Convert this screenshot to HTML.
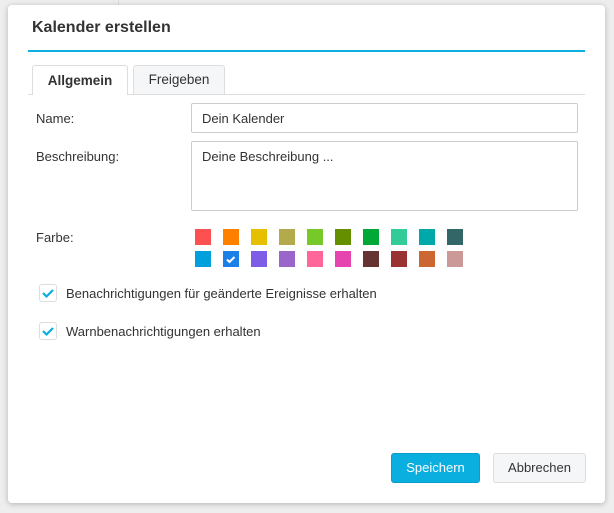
<!DOCTYPE html>
<html><head><style>
body{margin:0;width:614px;height:513px;background:#eeeeee;font-family:"Liberation Sans",sans-serif;position:relative;overflow:hidden;font-size:13px;color:#333}
.dlg{position:absolute;left:8px;top:5px;width:597px;height:498px;background:#fff;border-radius:4px;box-shadow:0 1px 6px rgba(0,0,0,.25)}
.a{position:absolute}
.sw{position:absolute;width:16px;height:16px}
.cb{position:absolute;left:31px;width:16px;height:16px;border:1px solid #ddd;border-radius:3px;background:#fff}
.inp{position:absolute;left:183px;width:387px;border:1px solid #ccc;border-radius:2px;font-size:13px;color:#333;padding:7px 10px;box-sizing:border-box}
</style></head><body>
<div class="a" style="left:118px;top:0;width:1px;height:5px;background:#ddd"></div>
<div class="dlg">
<div class="a" style="left:24px;top:14px;font-size:16px;font-weight:bold;color:#333">Kalender erstellen</div>
<div class="a" style="left:20px;top:45px;width:557px;height:2px;background:#0aaedf"></div>
<div class="a" style="left:20px;top:89px;width:557px;height:1px;background:#ddd"></div>
<div class="a" style="left:24px;top:60px;width:96px;height:30px;border:1px solid #ddd;border-bottom:none;background:#fff;border-radius:3px 3px 0 0;box-sizing:border-box;text-align:center;line-height:29px;font-weight:bold;font-size:13.5px">Allgemein</div>
<div class="a" style="left:125px;top:60px;width:92px;height:29px;border:1px solid #ddd;border-bottom:none;background:#f5f6f8;border-radius:3px 3px 0 0;box-sizing:border-box;text-align:center;line-height:28px;font-size:13.5px">Freigeben</div>
<div class="a" style="left:28px;top:106px">Name:</div>
<div class="inp" style="top:98px;height:30px">Dein Kalender</div>
<div class="a" style="left:28px;top:144px">Beschreibung:</div>
<div class="inp" style="top:136px;height:70px">Deine Beschreibung ...</div>
<div class="a" style="left:28px;top:225px">Farbe:</div>
<div class="sw" style="left:187px;top:224px;background:#fd5050"></div>
<div class="sw" style="left:215px;top:224px;background:#ff8000"></div>
<div class="sw" style="left:243px;top:224px;background:#e6bf00"></div>
<div class="sw" style="left:271px;top:224px;background:#b3aa4c"></div>
<div class="sw" style="left:299px;top:224px;background:#77c92a"></div>
<div class="sw" style="left:327px;top:224px;background:#668f00"></div>
<div class="sw" style="left:355px;top:224px;background:#00a838"></div>
<div class="sw" style="left:383px;top:224px;background:#33cc99"></div>
<div class="sw" style="left:411px;top:224px;background:#00a9a9"></div>
<div class="sw" style="left:439px;top:224px;background:#336666"></div>
<div class="sw" style="left:187px;top:246px;background:#00a0dc"></div>
<div class="sw" style="left:215px;top:246px;background:#1a7fe6"><svg width="16" height="16"><path d="M4 8.5l2.5 2.5 5-5" stroke="#fff" stroke-width="2" fill="none"/></svg></div>
<div class="sw" style="left:243px;top:246px;background:#7d5ce6"></div>
<div class="sw" style="left:271px;top:246px;background:#9966cc"></div>
<div class="sw" style="left:299px;top:246px;background:#ff6699"></div>
<div class="sw" style="left:327px;top:246px;background:#e645b0"></div>
<div class="sw" style="left:355px;top:246px;background:#663333"></div>
<div class="sw" style="left:383px;top:246px;background:#993333"></div>
<div class="sw" style="left:411px;top:246px;background:#cc6633"></div>
<div class="sw" style="left:439px;top:246px;background:#cc9999"></div>
<div class="cb" style="top:279px"><svg width="16" height="16"><path d="M3 8l3.5 3.5L13 5" stroke="#0aaedf" stroke-width="2.2" fill="none"/></svg></div>
<div class="a" style="left:58px;top:281px">Benachrichtigungen für geänderte Ereignisse erhalten</div>
<div class="cb" style="top:317px"><svg width="16" height="16"><path d="M3 8l3.5 3.5L13 5" stroke="#0aaedf" stroke-width="2.2" fill="none"/></svg></div>
<div class="a" style="left:58px;top:319px">Warnbenachrichtigungen erhalten</div>
<div class="a" style="left:383px;top:448px;width:89px;height:30px;background:#0aaedf;border:1px solid #0a9ccb;border-radius:3px;box-sizing:border-box;color:#fff;text-align:center;line-height:28px">Speichern</div>
<div class="a" style="left:485px;top:448px;width:93px;height:30px;background:#f5f6f8;border:1px solid #ddd;border-radius:3px;box-sizing:border-box;color:#333;text-align:center;line-height:28px">Abbrechen</div>
</div>
</body></html>
